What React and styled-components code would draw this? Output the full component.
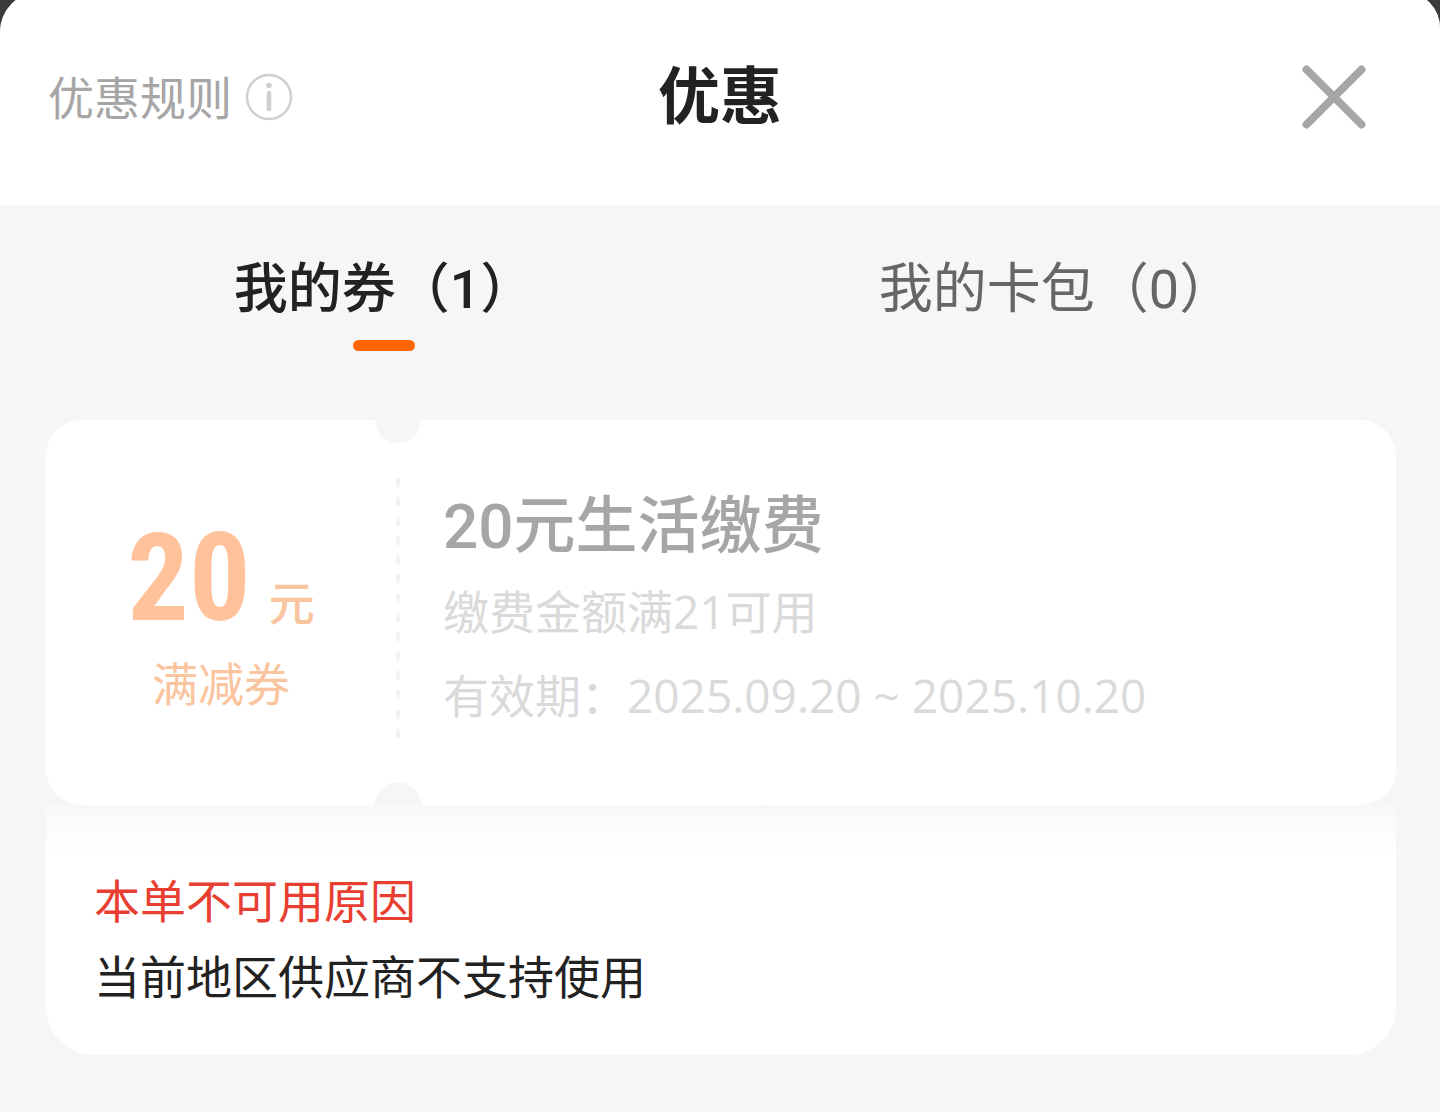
// Components==============
import React, { useState } from "react";
import styled, { createGlobalStyle, ThemeProvider } from "styled-components";
// =========================

const theme = {
  white: "#ffffff",
  page: "#f5f6f8",
  backdrop: "#3b3b3b",
  ink: "#222222",
  orange: "#ff6600",
  peach: "#ffc29b",
  peachText: "#f9c49e",
  red: "#e83f32",
  gray: { s4: "#666666", s5: "#a6a6a6", s6: "#cfcfcf", s7: "#dadada", s8: "#f3f3f3" },
  fontSize: { body: "46px", tab: "54px", title: "62px", amount: "122px" },
  font: {
    body: `"Open Sans", "Noto Sans CJK SC", sans-serif`,
    heading: `"Roboto", "Noto Sans CJK SC", sans-serif`,
    amount: `"Roboto Condensed", "Roboto", sans-serif`
  }
};

const GlobalStyle = createGlobalStyle`
  * {
    box-sizing: border-box;
  }

  body {
    margin: 0;
    background-color: ${theme.backdrop};
    font-family: ${theme.font.body};
  }

  h1, h2, p {
    margin: 0;
  }

  button {
    border: 0;
    padding: 0;
    background: none;
    font: inherit;
    cursor: pointer;
  }
`;

const Screen = styled.div`
  min-height: 100vh;
  overflow: hidden;
`;

const Sheet = styled.main`
  display: flow-root;
  margin-top: -8px;
  min-height: calc(100vh + 8px);
  border-radius: 40px 36px 0 0;
  overflow: hidden;
  background-color: ${({ theme: { page } }) => page};
`;

const Header = styled.header`
  display: grid;
  grid-template-columns: 1fr auto 1fr;
  align-items: center;
  height: 213px;
  padding: 0 48px 4px;
  background-color: ${({ theme: { white } }) => white};
`;

const RulesButton = styled.button`
  display: flex;
  align-items: center;
  justify-self: start;
  gap: 13px;
  color: ${({ theme: { gray } }) => gray.s5};
  font-size: ${({ theme: { fontSize } }) => fontSize.body};
  line-height: 64px;

  svg {
    color: ${({ theme: { gray } }) => gray.s6};
  }
`;

const Title = styled.h1`
  padding-bottom: 4px;
  color: ${({ theme: { ink } }) => ink};
  font-size: ${({ theme: { fontSize } }) => fontSize.title};
  font-weight: 700;
  line-height: 84px;
`;

const CloseButton = styled.button`
  display: flex;
  justify-self: end;
  padding: 0 24px;
  color: ${({ theme: { gray } }) => gray.s5};
`;

const Tabs = styled.div`
  display: grid;
  grid-template-columns: 1fr 1fr;
  padding: 45px 48px 0;
`;

const Tab = styled.button`
  display: flex;
  flex-direction: column;
  align-items: center;
  gap: 10px;
  color: ${({ $active, theme: { ink, gray } }) => ($active ? ink : gray.s4)};
  font-family: ${({ theme: { font } }) => font.heading};
  font-size: ${({ theme: { fontSize } }) => fontSize.tab};
  font-weight: ${({ $active }) => ($active ? 500 : 400)};
  line-height: 80px;

  &::after {
    content: "";
    width: 62px;
    height: 11px;
    border-radius: 6px;
    background-color: ${({ $active, theme: { orange } }) =>
      $active ? orange : "transparent"};
  }
`;

const Coupon = styled.article`
  margin: 69px 44px 57px 46px;
`;

const Ticket = styled.div`
  display: grid;
  grid-template-columns: 350px 4px 1fr;
  height: 385px;
  border-radius: 36px;
  background-color: ${({ theme: { white } }) => white};
`;

const Value = styled.div`
  display: flex;
  flex-direction: column;
  align-items: center;
  padding-top: 93px;
  color: ${({ theme: { peachText } }) => peachText};
  font-size: ${({ theme: { fontSize } }) => fontSize.body};
  line-height: 76px;
`;

const Amount = styled.p`
  display: flex;
  align-items: baseline;
  gap: 18px;
  font-weight: 500;
`;

const Number = styled.span`
  color: ${({ theme: { peach } }) => peach};
  font-family: ${({ theme: { font } }) => font.amount};
  font-size: ${({ theme: { fontSize } }) => fontSize.amount};
  font-weight: 700;
  line-height: 132px;
`;

const Perforation = styled.div`
  position: relative;
  display: flex;
  flex-direction: column;
  justify-content: space-between;
  margin: 58px 0 67px;

  &::before,
  &::after {
    content: "";
    position: absolute;
    left: -21px;
    width: 46px;
    height: 23px;
    background-color: ${({ theme: { page } }) => page};
  }

  &::before {
    top: -58px;
    border-radius: 0 0 23px 23px;
  }

  &::after {
    bottom: -67px;
    border-radius: 23px 23px 0 0;
  }
`;

const Dash = styled.span`
  height: 9px;
  background-color: ${({ theme: { gray } }) => gray.s8};
`;

const Details = styled.div`
  padding: 65px 32px 0 43px;
  color: ${({ theme: { gray } }) => gray.s7};
  font-size: ${({ theme: { fontSize } }) => fontSize.body};
  line-height: 84px;

  h2 {
    color: ${({ theme: { gray } }) => gray.s5};
    font-family: ${({ theme: { font } }) => font.heading};
    font-size: ${({ theme: { fontSize } }) => fontSize.title};
    font-weight: 500;
  }
`;

const Reason = styled.section`
  padding: 57px 48px 41px;
  border-radius: 0 0 48px 48px;
  background: linear-gradient(#f8f8f8, #ffffff 48px);
  color: ${({ theme: { ink } }) => ink};
  font-size: ${({ theme: { fontSize } }) => fontSize.body};
  line-height: 76px;

  h2 {
    color: ${({ theme: { red } }) => red};
    font-size: inherit;
    font-weight: 400;
  }
`;

const InfoIcon = () => (
  <svg width="48" height="48" viewBox="0 0 48 48" fill="none" aria-hidden="true">
    <circle cx="24" cy="24" r="22" stroke="currentColor" strokeWidth="2.4" />
    <circle cx="24" cy="12.5" r="2.8" fill="currentColor" />
    <path d="M24 20v16" stroke="currentColor" strokeWidth="4.6" strokeLinecap="round" />
  </svg>
);

const CloseIcon = () => (
  <svg width="68" height="68" viewBox="0 0 68 68" fill="none" aria-hidden="true">
    <path
      d="M6.5 6.5l55 55M61.5 6.5l-55 55"
      stroke="currentColor"
      strokeWidth="8"
      strokeLinecap="round"
    />
  </svg>
);

const tabs = ["我的券（1）", "我的卡包（0）"];
const dashes = Array.from({ length: 14 }, (_, i) => i);

export default function App() {
  const [active, setActive] = useState(0);

  return (
    <ThemeProvider theme={theme}>
      <GlobalStyle />
      <Screen>
        <Sheet>
          <Header>
            <RulesButton type="button">
              优惠规则
              <InfoIcon />
            </RulesButton>
            <Title>优惠</Title>
            <CloseButton type="button" aria-label="关闭">
              <CloseIcon />
            </CloseButton>
          </Header>
          <Tabs role="tablist">
            {tabs.map((label, i) => (
              <Tab
                key={label}
                type="button"
                role="tab"
                aria-selected={i === active}
                $active={i === active}
                onClick={() => setActive(i)}
              >
                {label}
              </Tab>
            ))}
          </Tabs>
          <Coupon>
            <Ticket>
              <Value>
                <Amount>
                  <Number>20</Number>元
                </Amount>
                <p>满减券</p>
              </Value>
              <Perforation>
                {dashes.map(i => (
                  <Dash key={i} />
                ))}
              </Perforation>
              <Details>
                <h2>20元生活缴费</h2>
                <p>缴费金额满21可用</p>
                <p>有效期：2025.09.20 ~ 2025.10.20</p>
              </Details>
            </Ticket>
            <Reason>
              <h2>本单不可用原因</h2>
              <p>当前地区供应商不支持使用</p>
            </Reason>
          </Coupon>
        </Sheet>
      </Screen>
    </ThemeProvider>
  );
}
